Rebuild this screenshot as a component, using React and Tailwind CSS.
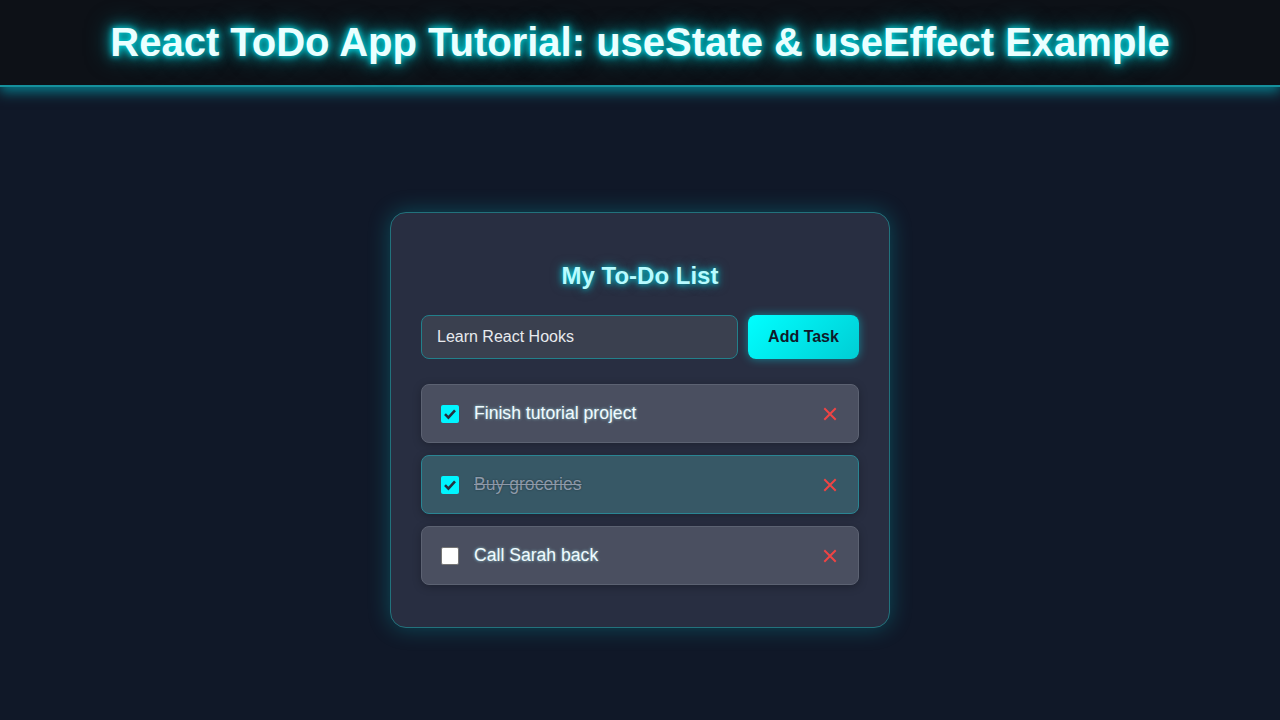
import React, { useState } from "react";

const font = { fontFamily: '"Liberation Sans", Arial, sans-serif' };

function TodoItem({ item, checked, onToggle, onDelete }) {
  return (
    <li
      className={`flex items-center h-[59px] pl-[19px] pr-[20px] rounded-[8px] border shadow-[0_2px_8px_rgba(0,0,0,0.25)] ${
        item.done
          ? "bg-[#375866] border-[#2a8593]"
          : "bg-[#4a4f60] border-[#5c6272]"
      }`}
    >
      <span
        onClick={onToggle}
        className={`w-[18px] h-[18px] rounded-[2px] flex items-center justify-center shrink-0 cursor-pointer ${
          checked ? "bg-[#00f5ff]" : "bg-white border border-[#767676]"
        }`}
      >
        {checked && (
          <svg width="14" height="14" viewBox="0 0 14 14">
            <path d="M2 7.2 L5.4 10.6 L12 3.4" fill="none" stroke="#263040" strokeWidth="2.6" />
          </svg>
        )}
      </span>
      <span
        className={`ml-[15px] flex-1 text-[17.6px] ${
          item.done
            ? "text-[#8e9aaa] line-through [text-shadow:0_0_2px_rgba(0,0,0,0.4)]"
            : "text-[#f0fbff] [text-shadow:0_0_3px_rgba(180,255,255,0.7)]"
        }`}
      >
        {item.text}
      </span>
      <button onClick={onDelete} className="w-[16px] h-[16px] flex items-center justify-center">
        <svg width="14" height="14" viewBox="0 0 14 14">
          <path d="M2 2 L12 12 M12 2 L2 12" stroke="#ef4444" strokeWidth="2" strokeLinecap="square" />
        </svg>
      </button>
    </li>
  );
}

export default function App() {
  const [text, setText] = useState("Learn React Hooks");
  const [items, setItems] = useState([
    { id: 1, text: "Finish tutorial project", done: false, checked: true },
    { id: 2, text: "Buy groceries", done: true, checked: true },
    { id: 3, text: "Call Sarah back", done: false, checked: false },
  ]);

  return (
    <div className="min-h-[720px] bg-[#101828] flex flex-col" style={font}>
      <header className="h-[87px] bg-[#0d1117] border-b-[2px] border-[#15909c] shadow-[0_5px_12px_rgba(0,200,215,0.55)] flex items-center justify-center relative z-10">
        <h1 className="text-[40px] font-bold text-[#eaffff] [text-shadow:0_0_6px_#00e5ee,0_0_14px_#00c8d0,0_0_26px_rgba(0,200,210,0.6)] mt-[-2px]">
          React ToDo App Tutorial: useState &amp; useEffect Example
        </h1>
      </header>

      <main className="flex justify-center pt-[125px]">
        <div className="w-[500px] rounded-[16px] bg-[#282e41] border border-[#22727c] shadow-[0_0_22px_rgba(0,210,220,0.28)] px-[30px] pt-[49px] pb-[42px]">
          <h2 className="text-center text-[24px] leading-[28px] font-bold text-[#b8fbff] [text-shadow:0_0_6px_#00d5e0,0_0_12px_rgba(0,213,224,0.5)]">
            My To-Do List
          </h2>
          <div className="flex gap-[10px] mt-[25px]">
            <input
              value={text}
              onChange={(e) => setText(e.target.value)}
              className="flex-1 h-[44px] rounded-[8px] bg-[#3a404f] border border-[#22808b] px-[15px] text-[16px] text-[#e8eaee] outline-none"
              style={font}
            />
            <button
              className="w-[111px] h-[44px] rounded-[8px] bg-[linear-gradient(135deg,#00ffff,#00cdd4)] text-[#0f1a2a] text-[16px] font-bold shadow-[0_0_10px_rgba(0,240,255,0.45)]"
              style={font}
            >
              Add Task
            </button>
          </div>
          <ul className="mt-[25px] flex flex-col gap-[12px]">
            {items.map((it) => (
              <TodoItem
                key={it.id}
                item={it}
                checked={it.checked}
                onToggle={() =>
                  setItems(items.map((x) => (x.id === it.id ? { ...x, checked: !x.checked } : x)))
                }
                onDelete={() => setItems(items.filter((x) => x.id !== it.id))}
              />
            ))}
          </ul>
        </div>
      </main>
    </div>
  );
}
